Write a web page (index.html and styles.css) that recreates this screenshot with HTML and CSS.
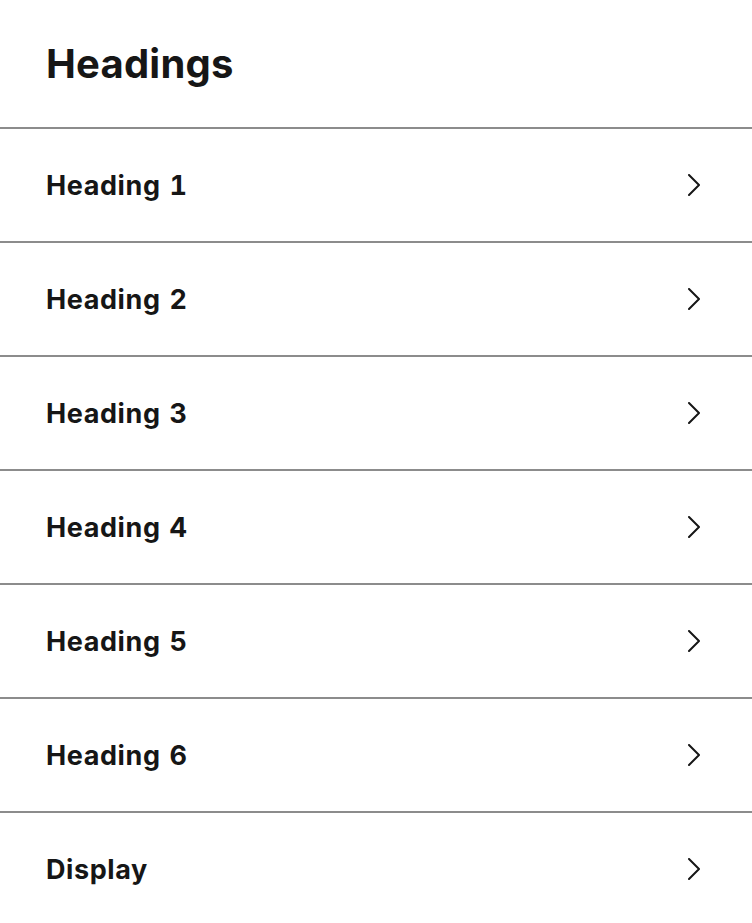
FILE: index.html
```html
<!DOCTYPE html>
<html lang="en">
<head>
<meta charset="utf-8">
<title>Headings</title>
<link rel="stylesheet" href="styles.css">
</head>
<body>
<div class="page">
  <header class="title-bar">
    <h1 class="title">Headings</h1>
  </header>
  <ul class="list">
    <li class="row"><span class="label">Heading 1</span><svg class="chev" viewBox="0 0 12 22" width="12" height="22"><path d="M1 1 L11 11 L1 21" /></svg></li>
    <li class="row"><span class="label">Heading 2</span><svg class="chev" viewBox="0 0 12 22" width="12" height="22"><path d="M1 1 L11 11 L1 21" /></svg></li>
    <li class="row"><span class="label">Heading 3</span><svg class="chev" viewBox="0 0 12 22" width="12" height="22"><path d="M1 1 L11 11 L1 21" /></svg></li>
    <li class="row"><span class="label">Heading 4</span><svg class="chev" viewBox="0 0 12 22" width="12" height="22"><path d="M1 1 L11 11 L1 21" /></svg></li>
    <li class="row"><span class="label">Heading 5</span><svg class="chev" viewBox="0 0 12 22" width="12" height="22"><path d="M1 1 L11 11 L1 21" /></svg></li>
    <li class="row"><span class="label">Heading 6</span><svg class="chev" viewBox="0 0 12 22" width="12" height="22"><path d="M1 1 L11 11 L1 21" /></svg></li>
    <li class="row"><span class="label">Display</span><svg class="chev" viewBox="0 0 12 22" width="12" height="22"><path d="M1 1 L11 11 L1 21" /></svg></li>
  </ul>
</div>
</body>
</html>
```
FILE: styles.css
```css
html, body {
  margin: 0;
  padding: 0;
  background: #ffffff;
}
body {
  font-family: "Inter", "Noto Sans", sans-serif;
  color: #161616;
}
.page {
  width: 752px;
}
.title-bar {
  height: 127px;
  border-bottom: 2px solid #8c8c8c;
  display: flex;
  align-items: center;
  padding: 0 46px;
}
.title {
  margin: 0;
  font-size: 40px;
  font-weight: 700;
  line-height: 1;
  letter-spacing: 0.2px;
}
.list {
  list-style: none;
  margin: 0;
  padding: 0;
}
.row {
  height: 112px;
  border-bottom: 2px solid #8c8c8c;
  display: flex;
  align-items: center;
  justify-content: space-between;
  padding: 0 52px 0 46px;
}
.label {
  font-size: 27px;
  font-weight: 700;
  line-height: 1;
  letter-spacing: 0.6px;
  word-spacing: 1px;
  font-feature-settings: "tnum" 1;
}
.chev {
  display: block;
  fill: none;
  stroke: #161616;
  stroke-width: 2;
  stroke-linecap: round;
  stroke-linejoin: round;
}
```
